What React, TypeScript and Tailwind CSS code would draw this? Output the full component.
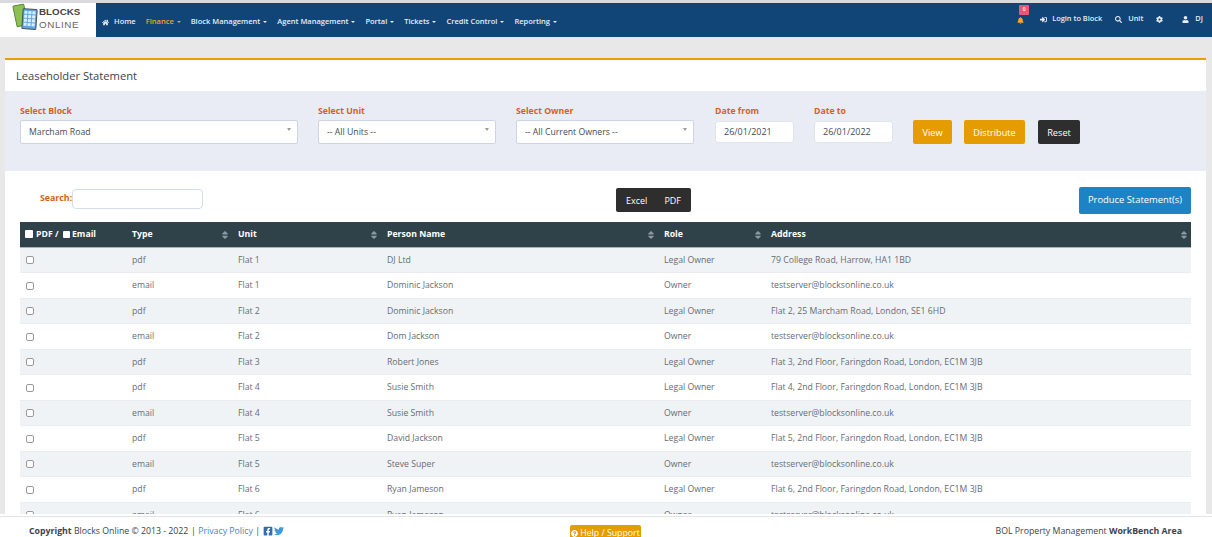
import { FaHome, FaSignInAlt, FaSearch, FaCog, FaUser, FaBell, FaFacebookSquare, FaTwitter, FaQuestionCircle, FaSort } from "react-icons/fa";

const menu = ["Block Management", "Agent Management", "Portal", "Tickets", "Credit Control", "Reporting"];

const rows = [
  ["pdf", "Flat 1", "DJ Ltd", "Legal Owner", "79 College Road, Harrow, HA1 1BD"],
  ["email", "Flat 1", "Dominic Jackson", "Owner", "testserver@blocksonline.co.uk"],
  ["pdf", "Flat 2", "Dominic Jackson", "Legal Owner", "Flat 2, 25 Marcham Road, London, SE1 6HD"],
  ["email", "Flat 2", "Dom Jackson", "Owner", "testserver@blocksonline.co.uk"],
  ["pdf", "Flat 3", "Robert Jones", "Legal Owner", "Flat 3, 2nd Floor, Faringdon Road, London, EC1M 3JB"],
  ["pdf", "Flat 4", "Susie Smith", "Legal Owner", "Flat 4, 2nd Floor, Faringdon Road, London, EC1M 3JB"],
  ["email", "Flat 4", "Susie Smith", "Owner", "testserver@blocksonline.co.uk"],
  ["pdf", "Flat 5", "David Jackson", "Legal Owner", "Flat 5, 2nd Floor, Faringdon Road, London, EC1M 3JB"],
  ["email", "Flat 5", "Steve Super", "Owner", "testserver@blocksonline.co.uk"],
  ["pdf", "Flat 6", "Ryan Jameson", "Legal Owner", "Flat 6, 2nd Floor, Faringdon Road, London, EC1M 3JB"],
  ["email", "Flat 6", "Ryan Jameson", "Owner", "testserver@blocksonline.co.uk"],
];

function Logo() {
  return (
    <svg width="27" height="28" viewBox="0 0 27 28" className="shrink-0 self-start">
      <g transform="rotate(-12 8 13)">
        <rect x="3" y="2" width="11" height="21" rx="1" fill="#8cc152" stroke="#5b8a32" strokeWidth="1" />
      </g>
      <g transform="rotate(4 17 16)">
        <rect x="10.5" y="6" width="14" height="20" rx="1" fill="#5aa9e6" stroke="#44525e" strokeWidth="1" />
        {[8, 12, 16, 20].map((y) =>
          [12, 16, 20].map((x) => <rect key={`${x}-${y}`} x={x} y={y} width="3" height="3" fill="#dcefff" />)
        )}
      </g>
    </svg>
  );
}

function Select({ label, value, width }: { label: string; value: string; width: string }) {
  return (
    <div className={`${width} shrink-0`}>
      <div className="text-[8.7px] leading-[12px] font-bold text-[#d9601a] mb-[3px]">{label}</div>
      <div className="h-[24px] bg-white border border-[#ccd5e6] rounded-[2px] flex items-center justify-between pl-[8px] pr-[6px] pt-[2px] text-[8.7px] text-[#444b55]">
        <span>{value}</span>
        <span className="w-0 h-0 mb-[7px] border-x-[2.5px] border-x-transparent border-t-[3px] border-t-[#999]" />
      </div>
    </div>
  );
}

function DateBox({ label, value }: { label: string; value: string }) {
  return (
    <div className="w-[79px] shrink-0">
      <div className="text-[8.7px] leading-[12px] font-bold text-[#d9601a] mb-[4px]">{label}</div>
      <div className="h-[22px] bg-white border border-[#dfe4ee] rounded-[3px] flex items-center pl-[8px] text-[9px] text-[#444b55]">{value}</div>
    </div>
  );
}

function Th({ children }: { children: React.ReactNode }) {
  return (
    <th className="px-[6px] text-left font-bold relative">
      {children}
      <FaSort className="absolute right-[2px] top-[7.5px] text-[10px] text-[#8b9aa1]" />
    </th>
  );
}

function Caret() {
  return <span className="inline-block align-middle w-0 h-0 ml-[1px] border-x-[2px] border-x-transparent border-t-[2px] border-t-current" />;
}

export default function App() {
  return (
    <div className="h-screen flex flex-col overflow-hidden bg-[#e8e8e8] font-['Open_Sans',sans-serif]">
      <div className="h-[3px] shrink-0 bg-[#d9d9de]" />
      <header className="h-[34px] shrink-0 flex bg-[#114477] text-white text-[7.5px] font-semibold">
        <div className="w-[96px] bg-white flex pl-[12px]">
          <Logo />
          <div className="mt-[2px] font-['Liberation_Sans',sans-serif] text-[9.8px] leading-[13px] font-normal">
            <div className="font-bold text-[#444]">BLOCKS</div>
            <div className="tracking-[0.6px] text-[#666]">ONLINE</div>
          </div>
        </div>
        <nav className="flex items-center pl-[6px] pt-[4px] text-[#e6edf5]">
          <span className="flex items-center gap-[5px] mr-[10px]"><FaHome className="text-[7px]" />Home</span>
          <span className="mr-[10px] text-[#f0a31d]">Finance <Caret /></span>
          {menu.map((m) => (
            <span key={m} className="mr-[10px]">{m} <Caret /></span>
          ))}
        </nav>
        <div className="ml-auto flex items-center pr-[9px] pb-[2px] text-[#e6edf5] text-[7.4px]">
          <span className="relative mr-[16px]">
            <FaBell className="text-[7px] text-[#f5a623] mt-[3px]" />
            <span className="absolute -top-[9px] left-[2px] w-[10px] h-[10px] rounded-[1px] bg-[#ef5470] text-white text-[5px] flex items-center justify-center">0</span>
          </span>
          <FaSignInAlt className="text-[7px] mr-[5px]" />
          <span className="mr-[13px]">Login to Block</span>
          <FaSearch className="text-[7px] mr-[6px]" />
          <span className="mr-[13px]">Unit</span>
          <FaCog className="text-[7px] mr-[19px]" />
          <FaUser className="text-[7px] mr-[6px]" />
          <span>DJ</span>
        </div>
      </header>

      <main className="flex-1 min-h-0 overflow-hidden pt-[21px] pl-[5px] pr-[6px]">
        <div className="bg-white border-t-2 border-[#e99e00] h-full">
          <h1 className="h-[31px] flex items-center pl-[11px] pt-[1px] text-[11.2px] text-[#3c434b] font-normal">Leaseholder Statement</h1>

          <section className="h-[80px] bg-[#e9ecf5] pt-[14px] pl-[15px] flex">
            <Select label="Select Block" value="Marcham Road" width="w-[278px]" />
            <div className="w-[20px]" />
            <Select label="Select Unit" value="-- All Units --" width="w-[178px]" />
            <div className="w-[20px]" />
            <Select label="Select Owner" value="-- All Current Owners --" width="w-[178px]" />
            <div className="w-[21px]" />
            <DateBox label="Date from" value="26/01/2021" />
            <div className="w-[20px]" />
            <DateBox label="Date to" value="26/01/2022" />
            <div className="flex gap-[12px] ml-[20px] mt-[15px] h-[24px] text-[9.2px] text-white">
              <button className="w-[39px] pt-px bg-[#e59c00] rounded-[2px]">View</button>
              <button className="w-[61px] pt-px bg-[#e59c00] rounded-[2px]">Distribute</button>
              <button className="w-[42px] pt-px ml-px bg-[#2e2e2e] rounded-[2px]">Reset</button>
            </div>
          </section>

          <div className="h-[51px] pl-[35px] pr-[15px] pt-[4px] flex items-center relative">
            <span className="text-[8.8px] font-bold text-[#d9601a]">Search:</span>
            <div className="w-[131px] h-[20px] border border-[#d5dcea] rounded-[4px] bg-white" />
            <div className="absolute left-[611px] top-[17px] w-[75px] h-[24px] pt-px bg-[#2e2e2e] rounded-[2px] text-white text-[9px] flex items-center justify-center gap-[17px]">
              <span>Excel</span>
              <span>PDF</span>
            </div>
            <button className="ml-auto mt-[3px] w-[112px] h-[27px] pt-px bg-[#1c84c6] rounded-[2px] text-white text-[9.4px]">Produce Statement(s)</button>
          </div>

          <div className="px-[15px]">
            <table className="w-full table-fixed border-collapse text-[8.7px] text-[#666c75]">
              <colgroup>
                <col className="w-[106px]" />
                <col className="w-[106px]" />
                <col className="w-[149px]" />
                <col className="w-[277px]" />
                <col className="w-[107px]" />
                <col />
              </colgroup>
              <thead className="bg-[#2f4149] text-white">
                <tr className="h-[25px] border-b border-[#a9b3b8]">
                  <th className="pl-[5px] text-left font-bold whitespace-nowrap">
                    <div className="flex items-center">
                      <span className="w-[8px] h-[8px] bg-white rounded-[1px] mr-[3px]" />
                      <span className="mr-[4px]">PDF /</span>
                      <span className="w-[7px] h-[7px] bg-white rounded-[1px] mr-[2.5px]" />
                      Email
                    </div>
                  </th>
                  <Th>Type</Th>
                  <Th>Unit</Th>
                  <Th>Person Name</Th>
                  <Th>Role</Th>
                  <Th>Address</Th>
                </tr>
              </thead>
              <tbody>
                {rows.map((r, i) => (
                  <tr key={i} className={`h-[25.5px] border-b border-[#e9edf1] ${i % 2 === 0 ? "bg-[#f0f3f6]" : "bg-white"}`}>
                    <td className="pl-[6px] pt-px">
                      <span className="block w-[8px] h-[8px] border border-[#9a9a9a] rounded-[2px] bg-white" />
                    </td>
                    {r.map((c, j) => (
                      <td key={j} className="px-[6px] pt-px whitespace-nowrap">{c}</td>
                    ))}
                  </tr>
                ))}
              </tbody>
            </table>
          </div>
        </div>
      </main>

      <footer className="h-[23px] shrink-0 bg-white flex items-start pt-[11px] pl-[29px] pr-[30px] text-[8.75px] leading-[12px] text-[#3c434b] relative">
        <div className="absolute inset-x-0 top-[2px] h-px bg-[#e3e3e3]" />
        <span>
          <b>Copyright</b> Blocks Online © 2013 - 2022
          <span className="mx-[2.5px]">|</span>
          <span className="text-[#3f87c6]">Privacy Policy</span>
          <span className="mx-[2.5px]">|</span>
        </span>
        <FaFacebookSquare className="text-[10px] text-[#2f6db0] mt-px" />
        <FaTwitter className="text-[10px] text-[#3f9bdc] ml-px mt-px" />
        <div className="absolute left-[570px] top-[11px] w-[71px] h-[12px] bg-[#e59c00] rounded-t-[2px] text-white flex items-start justify-center gap-[2px] pt-[2px]">
          <FaQuestionCircle className="text-[7px] mt-[3px]" />
          Help / Support
        </div>
        <span className="ml-auto">BOL Property Management <b>WorkBench Area</b></span>
      </footer>
    </div>
  );
}
